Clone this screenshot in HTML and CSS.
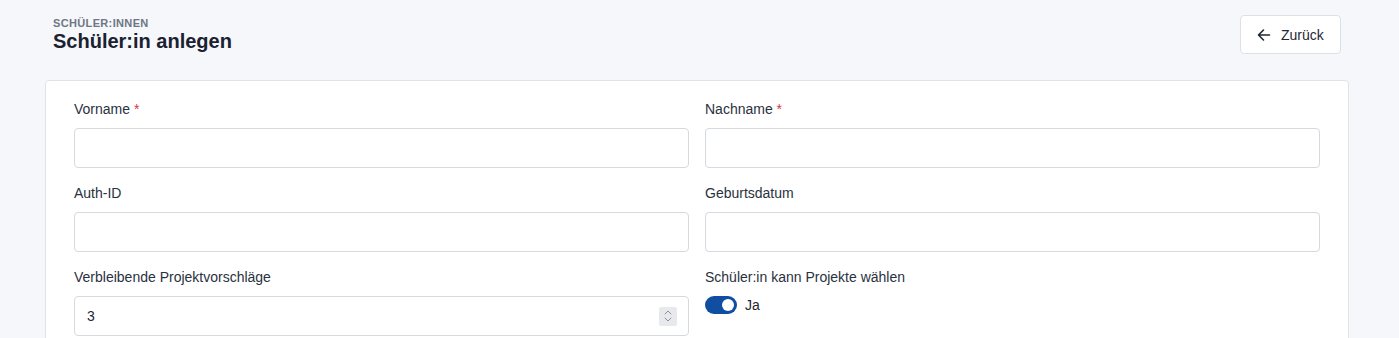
FILE: index.html
```html
<!DOCTYPE html>
<html lang="de">
<head>
<meta charset="utf-8">
<title>Schüler:in anlegen</title>
<link rel="stylesheet" href="styles.css">
</head>
<body>
<div class="page">
  <header class="page-header">
    <div class="titles">
      <div class="eyebrow">SCHÜLER:INNEN</div>
      <h1 class="title">Schüler:in anlegen</h1>
    </div>
    <button class="back-btn" type="button">
      <svg class="back-icon" width="14" height="14" viewBox="0 0 14 14" fill="none" stroke="currentColor" stroke-width="1.6" stroke-linecap="round" stroke-linejoin="round"><path d="M12.5 7H1.5M6.5 2L1.5 7l5 5"/></svg>
      <span>Zurück</span>
    </button>
  </header>
  <section class="card">
    <div class="grid">
      <div class="field">
        <label class="label">Vorname <span class="req">*</span></label>
        <input class="input" type="text">
      </div>
      <div class="field">
        <label class="label">Nachname <span class="req">*</span></label>
        <input class="input" type="text">
      </div>
      <div class="field">
        <label class="label">Auth-ID</label>
        <input class="input" type="text">
      </div>
      <div class="field">
        <label class="label">Geburtsdatum</label>
        <input class="input" type="text">
      </div>
      <div class="field">
        <label class="label">Verbleibende Projektvorschläge</label>
        <div class="input number">
          <span>3</span>
          <span class="spinner">
            <svg width="8" height="14" viewBox="0 0 8 14" fill="none" stroke="#8a8f98" stroke-width="1" stroke-linecap="round" stroke-linejoin="round"><path d="M1 5l3-3 3 3M1 9l3 3 3-3"/></svg>
          </span>
        </div>
      </div>
      <div class="field">
        <label class="label">Schüler:in kann Projekte wählen</label>
        <div class="switch-row">
          <span class="switch"><span class="knob"></span></span>
          <span class="switch-label">Ja</span>
        </div>
      </div>
    </div>
  </section>
</div>
</body>
</html>
```

FILE: styles.css
```css
* { box-sizing: border-box; }
html, body { margin: 0; padding: 0; }
body {
  background: #f6f7fb;
  font-family: "Liberation Sans", Arial, sans-serif;
  color: #1f2733;
  overflow: hidden;
  height: 338px;
}
.page { padding: 15px 50px 0 45px; }
.page-header {
  display: flex;
  justify-content: space-between;
  align-items: flex-start;
  padding-left: 8px;
  margin-bottom: 26px;
}
.titles { padding-top: 3px; }
.eyebrow {
  font-size: 11px;
  font-weight: 700;
  color: #6e7684;
  line-height: 11px;
  letter-spacing: 0.35px;
}
.title {
  margin: 0;
  font-size: 20px;
  font-weight: 700;
  line-height: 24px;
  color: #1a2130;
}
.back-btn {
  display: flex;
  align-items: center;
  gap: 10px;
  height: 39px;
  width: 101px;
  padding: 0 15px 0 16px;
  background: #fff;
  border: 1px solid #dde0e6;
  border-radius: 4px;
  font-family: inherit;
  font-size: 14px;
  color: #1f2733;
  margin-right: 8px;
}
.back-icon { flex: none; }
.card {
  background: #fff;
  border: 1px solid #dfe2e7;
  border-radius: 4px;
  padding: 18px 28px 20px 28px;
  min-height: 280px;
}
.grid {
  display: grid;
  grid-template-columns: 1fr 1fr;
  column-gap: 16px;
  row-gap: 15px;
}
.field { display: flex; flex-direction: column; }
.label {
  font-size: 14px;
  line-height: 20px;
  color: #2a3140;
  margin-bottom: 9px;
}
.req { color: #d9363e; }
.input {
  height: 40px;
  border: 1px solid #d5d9e0;
  border-radius: 4px;
  background: #fff;
  font-family: inherit;
  font-size: 14px;
  padding: 0 12px;
  width: 100%;
}
.number {
  display: flex;
  align-items: center;
  justify-content: space-between;
  color: #1f2733;
  padding-right: 11px;
}
.spinner {
  width: 18px;
  height: 19px;
  background: #e8e9ed;
  border-radius: 2px;
  display: flex;
  align-items: center;
  justify-content: center;
}
.switch-row {
  display: flex;
  align-items: center;
  gap: 8px;
  height: 18px;
}
.switch {
  width: 32px;
  height: 18px;
  border-radius: 9px;
  background: #0f4ea0;
  position: relative;
  flex: none;
}
.knob {
  position: absolute;
  top: 3px;
  right: 3px;
  width: 12px;
  height: 12px;
  border-radius: 50%;
  background: #fff;
}
.switch-label { font-size: 14px; color: #1f2733; }
```
